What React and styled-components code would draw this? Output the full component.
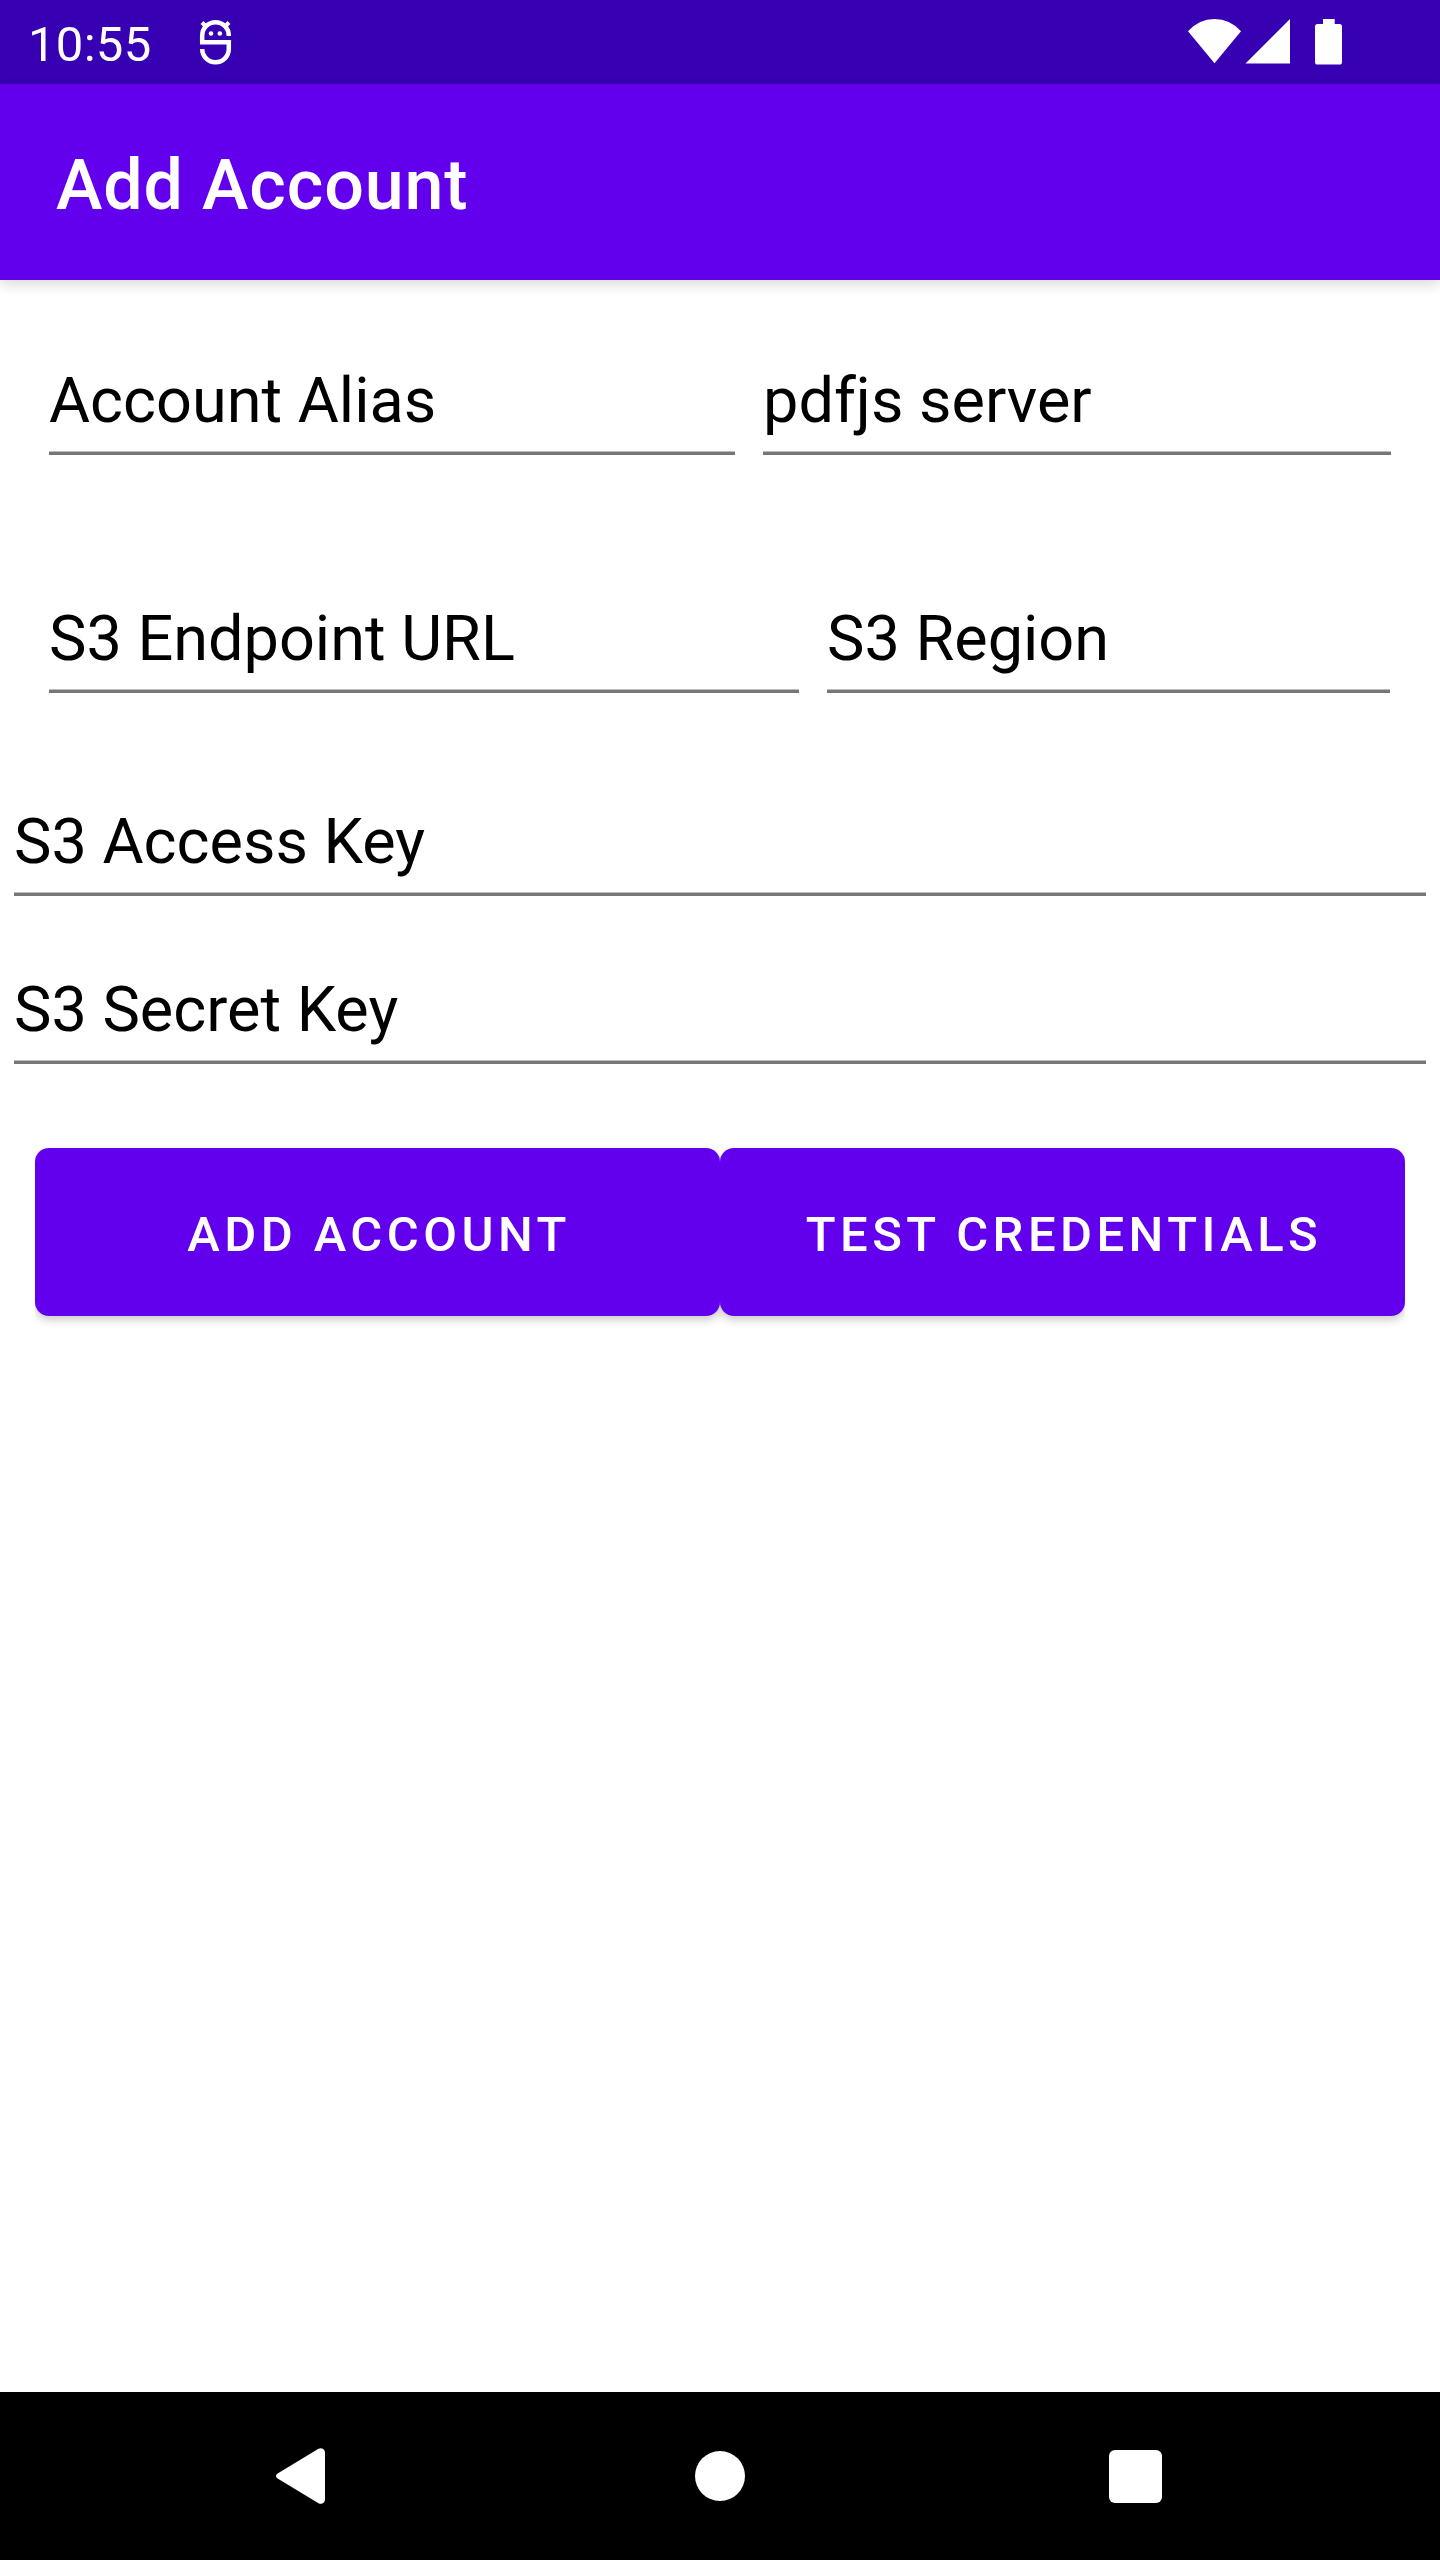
import React from "react";
import styled, { createGlobalStyle } from "styled-components";

const GlobalStyle = createGlobalStyle`
  * { box-sizing: border-box; }
  body { margin: 0; background: #ffffff; }
`;

const Screen = styled.div`
  display: flex;
  flex-direction: column;
  width: 1440px;
  height: 2560px;
  overflow: hidden;
  background: #ffffff;
  color: #000000;
  font-family: Roboto, "Liberation Sans", sans-serif;
`;

const StatusBar = styled.header`
  display: flex;
  align-items: flex-start;
  height: 84px;
  flex: none;
  padding: 0 98px 0 28px;
  background: #3700b3;
  color: #ffffff;
`;

const Clock = styled.span`
  width: 172px;
  padding-top: 16px;
  font-size: 49px;
  line-height: 58px;
  letter-spacing: 0.3px;
  white-space: nowrap;
`;

const StatusIcons = styled.div`
  margin-left: auto;
  display: flex;
`;

const Icon = styled.svg`
  display: block;
  flex: none;
  overflow: visible;
`;

const AppBar = styled.div`
  display: flex;
  align-items: center;
  height: 196px;
  flex: none;
  padding: 6px 56px 0;
  background: #6200ee;
  box-shadow: 0 5px 12px rgba(0, 0, 0, 0.14);
`;

const Title = styled.h1`
  margin: 0;
  color: #ffffff;
  font-size: 70px;
  font-weight: 500;
  line-height: 82px;
  letter-spacing: 0.85px;
`;

const Form = styled.main`
  flex: 1;
  padding-top: 84px;
`;

const FieldRow = styled.div`
  display: flex;
  gap: 28px;
  padding: 0 ${(p) => p.$right ?? p.$inset}px 0 ${(p) => p.$inset}px;
  margin-bottom: ${(p) => p.$after}px;
`;

const FieldBox = styled.div`
  flex: ${(p) => (p.$width ? `0 0 ${p.$width}px` : "1 1 0")};
  height: 91px;
  display: flex;
  flex-direction: column;
`;

const FieldText = styled.div`
  height: 74px;
  flex: none;
  font-size: 63px;
  line-height: 74px;
  white-space: nowrap;
`;

const Underline = styled.div`
  height: 4px;
  flex: none;
  margin-top: 13px;
  background: #777777;
  border-top: 1px solid #bbbbbb;
`;

const ButtonRow = styled.div`
  display: flex;
  margin: 0 35px;
  filter: drop-shadow(0 4px 4px rgba(0, 0, 0, 0.2));
  clip-path: inset(-8px 0 -16px 0);
`;

const Button = styled.button`
  flex: 1 1 0;
  height: 168px;
  padding: 6px 0 0 3px;
  border: 0;
  border-radius: 14px;
  background: #6200ee;
  color: #ffffff;
  font-family: inherit;
  font-size: 49px;
  font-weight: 500;
  line-height: 58px;
  letter-spacing: 4.45px;
  text-transform: uppercase;
  white-space: nowrap;
`;

const NavBar = styled.nav`
  display: grid;
  grid-template-columns: 1fr 50px 1fr;
  align-items: center;
  height: 168px;
  flex: none;
  padding: 0 278px 0 276px;
  background: #000000;

  & > :nth-child(2) {
    margin-left: 1px;
  }

  & > :last-child {
    justify-self: end;
  }
`;

function Field({ text, width }) {
  return (
    <FieldBox $width={width}>
      <FieldText>{text}</FieldText>
      <Underline />
    </FieldBox>
  );
}

export default function App() {
  return (
    <Screen>
      <GlobalStyle />
      <StatusBar>
        <Clock>10:55</Clock>
        <Icon width="31" height="84" viewBox="200 0 31 84" fill="none" stroke="#fff" strokeWidth="4.5">
          <path d="M228.8 36V35.5A13.3 13.3 0 0 0 202.2 35.5V42.2H228.8V49A13.3 13.3 0 0 1 202.2 49" />
          <path d="M202 22.5L206.5 27M229 22.5L224.5 27" strokeWidth="4" />
          <circle cx="211" cy="33.5" r="2.3" fill="#fff" stroke="none" />
          <circle cx="219.8" cy="33.5" r="2.3" fill="#fff" stroke="none" />
        </Icon>
        <StatusIcons>
          <Icon width="154" height="84" viewBox="1188 0 154 84" fill="#fff">
            <path d="M1188 31.2Q1199 19 1214.5 19T1241 31.2L1214.5 63.3Z" />
            <path d="M1290 19V63.5H1245.5Z" />
            <path d="M1323 19H1334.7V24H1339.5Q1342 24 1342 26.5V62Q1342 64.6 1339.5 64.6H1317.5Q1315 64.6 1315 62V26.5Q1315 24 1317.5 24H1323Z" />
          </Icon>
        </StatusIcons>
      </StatusBar>
      <AppBar>
        <Title>Add Account</Title>
      </AppBar>
      <Form>
        <FieldRow $inset={49} $after={147}>
          <Field text="Account Alias" width={686} />
          <Field text="pdfjs server" />
        </FieldRow>
        <FieldRow $inset={49} $right={50} $after={112}>
          <Field text="S3 Endpoint URL" width={750} />
          <Field text="S3 Region" />
        </FieldRow>
        <FieldRow $inset={14} $after={77}>
          <Field text="S3 Access Key" />
        </FieldRow>
        <FieldRow $inset={14} $after={84}>
          <Field text="S3 Secret Key" />
        </FieldRow>
        <ButtonRow>
          <Button>Add Account</Button>
          <Button>Test Credentials</Button>
        </ButtonRow>
      </Form>
      <NavBar>
        <Icon width="49" height="56" viewBox="0 0 49 56" fill="#fff">
          <path d="M1.6 25.4L42.5 .8Q44.5 -.4 46.8 .7Q49 2 49 4.5V51.5Q49 54 46.8 55.3Q44.5 56.4 42.5 55.2L1.6 30.6Q0 29.5 0 28T1.6 25.4Z" />
        </Icon>
        <Icon width="50" height="50" viewBox="0 0 50 50" fill="#fff">
          <circle cx="25" cy="25" r="25" />
        </Icon>
        <Icon width="53" height="53" viewBox="0 0 53 53" fill="#fff">
          <rect width="53" height="53" rx="6" />
        </Icon>
      </NavBar>
    </Screen>
  );
}
